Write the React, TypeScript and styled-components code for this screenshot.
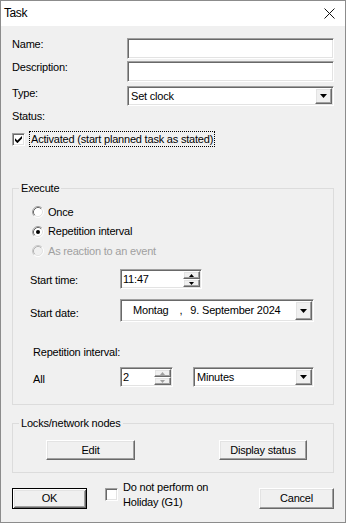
import styled, { createGlobalStyle, css } from "styled-components";

const GlobalStyle = createGlobalStyle`
  html, body {
    margin: 0;
    padding: 0;
    background: #fff;
  }
  body {
    font-family: "Liberation Sans", Arial, sans-serif;
  }
`;

const raised = css`
  box-sizing: border-box;
  background: #f0f0f0;
  border: 1px solid;
  border-color: #fff #696969 #696969 #fff;
  box-shadow: inset -1px -1px #a0a0a0, inset 1px 1px #e3e3e3;
`;

const sunken = css`
  box-sizing: border-box;
  background: #fff;
  border: 1px solid;
  border-color: #a0a0a0 #fff #fff #a0a0a0;
  box-shadow: inset 1px 1px #696969, inset -1px -1px #e3e3e3;
`;

const Window = styled.div`
  width: 346px;
  height: 523px;
  box-sizing: border-box;
  border: 1px solid #8c8c8c;
  display: flex;
  flex-direction: column;
  background: #f0f0f0;
  color: #000;
  font-family: "Liberation Sans", Arial, sans-serif;
  font-size: 11px;
  line-height: 13px;
  letter-spacing: -0.2px;
`;

const TitleBar = styled.div`
  height: 25px;
  background: #fff;
  display: flex;
  align-items: center;
  justify-content: space-between;
  padding: 0 10px 0 3px;
  font-size: 12px;
  letter-spacing: -0.4px;
`;

const Body = styled.div`
  flex: 1;
  display: flex;
  flex-direction: column;
  padding: 12px 11px 0 11px;
`;

const Row = styled.div<{ $mt?: number; $h?: number }>`
  display: flex;
  align-items: flex-start;
  margin-top: ${(p) => p.$mt ?? 0}px;
  height: ${(p) => (p.$h ? `${p.$h}px` : "auto")};
`;

const CenterRow = styled(Row)`
  align-items: center;
`;

const Label = styled.span<{ $w?: number; $shift?: number; $ml?: number }>`
  width: ${(p) => (p.$w ? `${p.$w}px` : "auto")};
  margin-top: ${(p) => p.$shift ?? 0}px;
  margin-left: ${(p) => p.$ml ?? 0}px;
  flex-shrink: 0;
  white-space: nowrap;
`;

const TextBox = styled.div<{ $w: number; $h: number }>`
  ${sunken}
  width: ${(p) => p.$w}px;
  height: ${(p) => p.$h}px;
`;

const Field = styled.div<{ $w: number; $h: number }>`
  ${sunken}
  width: ${(p) => p.$w}px;
  height: ${(p) => p.$h}px;
  padding: 1px;
  display: flex;
  align-items: stretch;
`;

const FieldText = styled.span<{ $pl?: number }>`
  flex: 1;
  display: flex;
  align-items: center;
  padding-left: ${(p) => p.$pl ?? 2}px;
  white-space: nowrap;
`;

const DatePart = styled.span<{ $ml: number }>`
  margin-left: ${(p) => p.$ml}px;
`;

const DropButton = styled.span`
  ${raised}
  width: 17px;
  display: flex;
  align-items: center;
  justify-content: center;
`;

const Spin = styled.span`
  width: 17px;
  display: flex;
  flex-direction: column;
`;

const SpinButton = styled.span`
  ${raised}
  flex: 1;
  display: flex;
  align-items: center;
  justify-content: center;
`;

const CheckBox = styled.span<{ $mt?: number }>`
  ${sunken}
  width: 13px;
  height: 13px;
  flex-shrink: 0;
  margin-top: ${(p) => p.$mt ?? 0}px;
  display: flex;
  align-items: center;
  justify-content: center;
`;

const FocusText = styled.span`
  margin-left: 4px;
  padding: 0 1px;
  line-height: 14px;
  border: 1px dotted #000;
`;

const Group = styled.fieldset<{ $mt: number }>`
  margin: ${(p) => p.$mt}px 0 0;
  padding: 0;
  min-width: 0;
  border: 1px solid #dcdcdc;
`;

const GroupTitle = styled.legend`
  margin-left: 6px;
  padding: 0 2px;
  line-height: 13px;
`;

const ExecuteBody = styled.div`
  display: flex;
  flex-direction: column;
  padding: 7.5px 19px 17px 17px;
`;

const RadioList = styled.div`
  display: flex;
  flex-direction: column;
  margin-left: 2px;
`;

const RadioRow = styled.label<{ $disabled?: boolean }>`
  height: 19.5px;
  display: flex;
  align-items: center;
  gap: 4px;
  color: ${(p) => (p.$disabled ? "#a0a0a0" : "#000")};
`;

const LocksBody = styled.div`
  display: flex;
  justify-content: space-between;
  padding: 10px 26px 12px 33px;
`;

const Button = styled.button<{ $w: number; $h?: number; $mt?: number; $primary?: boolean }>`
  ${raised}
  width: ${(p) => p.$w}px;
  height: ${(p) => p.$h ?? 20}px;
  margin-top: ${(p) => p.$mt ?? 0}px;
  padding: 0;
  font: inherit;
  letter-spacing: inherit;
  color: #000;
  ${(p) =>
    p.$primary &&
    css`
      border-color: #000;
      box-shadow: inset 1px 1px #fff, inset -1px -1px #696969,
        inset 2px 2px #e3e3e3, inset -2px -2px #a0a0a0;
    `}
`;

const FooterRow = styled.div`
  display: flex;
  align-items: flex-start;
  margin-top: 7px;
`;

const Holiday = styled.label`
  display: flex;
  align-items: flex-start;
  margin-left: 18px;
`;

const HolidayText = styled.span`
  margin-left: 5px;
  line-height: 15px;
`;

const CancelButton = styled(Button)`
  margin-left: auto;
`;

function CloseIcon() {
  return (
    <svg width="11" height="11" viewBox="0 0 11 11">
      <path d="M0.5 0.5L10.5 10.5M10.5 0.5L0.5 10.5" stroke="#111" strokeWidth="1" fill="none" />
    </svg>
  );
}

function Check() {
  return (
    <svg width="7" height="7" viewBox="0 0 7 7">
      <polygon points="0,2.2 2.4,4.6 7,0 7,2.6 2.4,7.2 0,4.8" fill="#000" />
    </svg>
  );
}

function Arrow({ up, small, color = "#000" }: { up?: boolean; small?: boolean; color?: string }) {
  const w = small ? 5 : 7;
  const h = small ? 3 : 4;
  const pts = up ? `0,${h} ${w},${h} ${w / 2},0` : `0,0 ${w},0 ${w / 2},${h}`;
  return (
    <svg width={w} height={h} viewBox={`0 0 ${w} ${h}`}>
      <polygon points={pts} fill={color} />
    </svg>
  );
}

function Radio({ checked, disabled }: { checked?: boolean; disabled?: boolean }) {
  return (
    <svg width="12" height="12" viewBox="0 0 12 12">
      <circle cx="6" cy="6" r="5" fill={disabled ? "#f0f0f0" : "#fff"} />
      <path d="M2.11 9.89A5.5 5.5 0 0 1 9.89 2.11" stroke={disabled ? "#c8c8c8" : "#a0a0a0"} fill="none" />
      <path d="M9.89 2.11A5.5 5.5 0 0 1 2.11 9.89" stroke="#fff" fill="none" />
      <path d="M2.82 9.18A4.5 4.5 0 0 1 9.18 2.82" stroke={disabled ? "#b4b4b4" : "#696969"} fill="none" />
      <path d="M9.18 2.82A4.5 4.5 0 0 1 2.82 9.18" stroke="#e3e3e3" fill="none" />
      {checked && <circle cx="6" cy="6" r="2" fill="#000" />}
    </svg>
  );
}

function ComboBox({ w, h, value }: { w: number; h: number; value: string }) {
  return (
    <Field $w={w} $h={h}>
      <FieldText>{value}</FieldText>
      <DropButton>
        <Arrow />
      </DropButton>
    </Field>
  );
}

function SpinBox({ w, value, dim }: { w: number; value: string; dim?: boolean }) {
  const c = dim ? "#a0a0a0" : "#000";
  return (
    <Field $w={w} $h={20}>
      <FieldText $pl={1}>{value}</FieldText>
      <Spin>
        <SpinButton>
          <Arrow up small color={c} />
        </SpinButton>
        <SpinButton>
          <Arrow small color={c} />
        </SpinButton>
      </Spin>
    </Field>
  );
}

export default function App() {
  return (
    <>
      <GlobalStyle />
      <Window>
        <TitleBar>
          <span>Task</span>
          <CloseIcon />
        </TitleBar>
        <Body>
          <Row $h={21}>
            <Label $w={115}>Name:</Label>
            <TextBox $w={207} $h={21} />
          </Row>
          <Row $mt={2} $h={21}>
            <Label $w={115}>Description:</Label>
            <TextBox $w={207} $h={21} />
          </Row>
          <Row $mt={4} $h={20}>
            <Label $w={115} $shift={1}>Type:</Label>
            <ComboBox w={207} h={20} value="Set clock" />
          </Row>
          <Row $mt={4}>
            <Label>Status:</Label>
          </Row>
          <CenterRow $mt={8} $h={16}>
            <CheckBox>
              <Check />
            </CheckBox>
            <FocusText>Activated (start planned task as stated)</FocusText>
          </CenterRow>

          <Group $mt={35}>
            <GroupTitle>Execute</GroupTitle>
            <ExecuteBody>
              <RadioList>
                <RadioRow>
                  <Radio />
                  Once
                </RadioRow>
                <RadioRow>
                  <Radio checked />
                  Repetition interval
                </RadioRow>
                <RadioRow $disabled>
                  <Radio disabled />
                  As reaction to an event
                </RadioRow>
              </RadioList>

              <CenterRow $mt={8} $h={20}>
                <Label $w={90} $shift={2}>Start time:</Label>
                <SpinBox w={82} value="11:47" />
              </CenterRow>

              <CenterRow $mt={10} $h={23}>
                <Label $w={90} $shift={5}>Start date:</Label>
                <Field $w={194} $h={23}>
                  <FieldText $pl={11}>
                    Montag
                    <DatePart $ml={11}>,</DatePart>
                    <DatePart $ml={8}>9. September 2024</DatePart>
                  </FieldText>
                  <DropButton>
                    <Arrow />
                  </DropButton>
                </Field>
              </CenterRow>

              <Row $mt={24}>
                <Label $ml={3}>Repetition interval:</Label>
              </Row>

              <CenterRow $mt={8} $h={20}>
                <Label $w={87} $ml={3} $shift={4}>All</Label>
                <SpinBox w={53} value="2" dim />
                <Label $w={20} />
                <ComboBox w={121} h={20} value="Minutes" />
              </CenterRow>
            </ExecuteBody>
          </Group>

          <Group $mt={12}>
            <GroupTitle>Locks/network nodes</GroupTitle>
            <LocksBody>
              <Button $w={89}>Edit</Button>
              <Button $w={88}>Display status</Button>
            </LocksBody>
          </Group>

          <FooterRow>
            <Button $w={75} $h={21} $mt={8} $primary>
              OK
            </Button>
            <Holiday>
              <CheckBox $mt={8} />
              <HolidayText>
                Do not perform on
                <br />
                Holiday (G1)
              </HolidayText>
            </Holiday>
            <CancelButton $w={75} $h={21} $mt={8}>
              Cancel
            </CancelButton>
          </FooterRow>
        </Body>
      </Window>
    </>
  );
}
